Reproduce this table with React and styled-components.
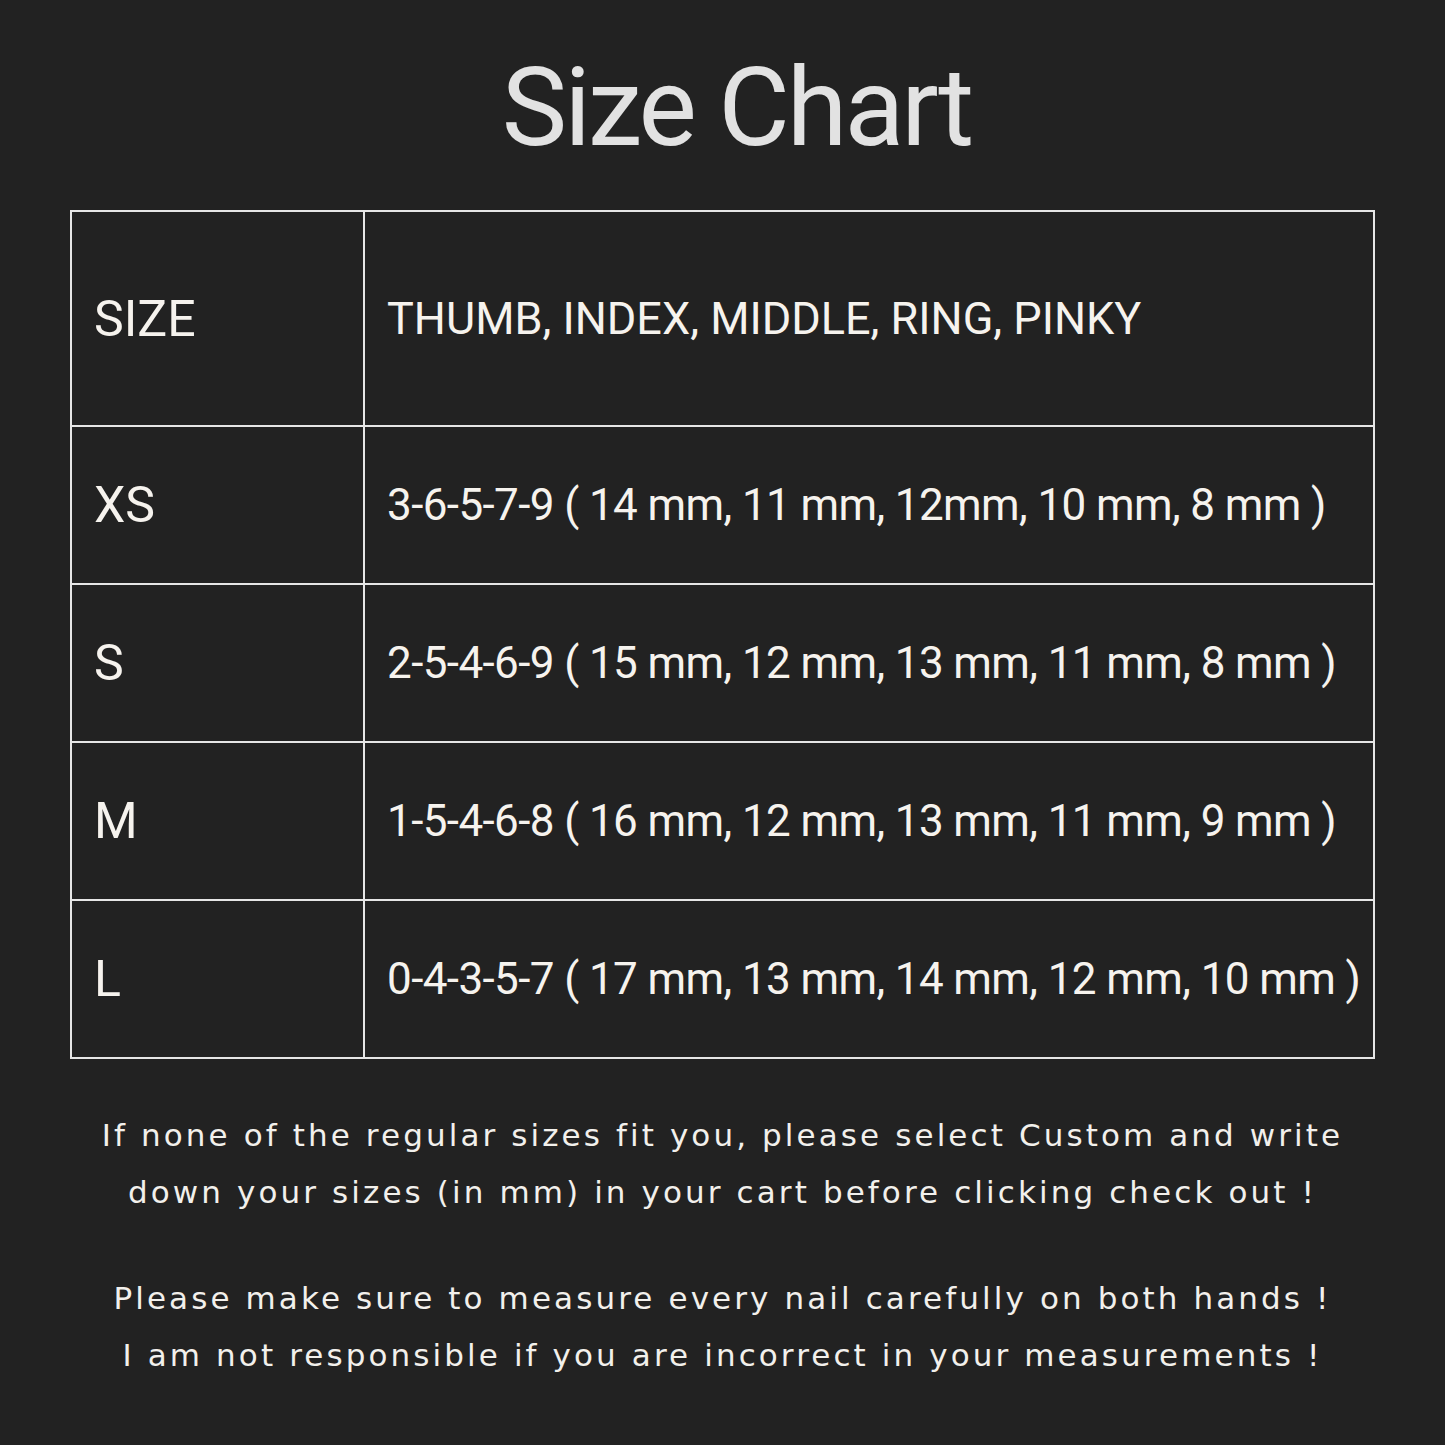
import React from "react";
import styled, { createGlobalStyle } from "styled-components";

const GlobalStyle = createGlobalStyle`
  html, body {
    margin: 0;
    padding: 0;
    background: #222222;
  }
  body {
    font-family: Roboto, "Liberation Sans", sans-serif;
  }
`;

const Page = styled.div`
  width: 1445px;
  height: 1445px;
  box-sizing: border-box;
  padding-top: 50px;
  display: flex;
  flex-direction: column;
  align-items: center;
  background: #222222;
`;

const Title = styled.h1`
  margin: 0 0 0 28px;
  font-size: 110px;
  line-height: 116px;
  font-weight: 400;
  color: #e2e2e2;
  letter-spacing: -3px;
`;

const Table = styled.table`
  margin-top: 44px;
  width: 1305px;
  border-collapse: collapse;
  table-layout: fixed;
  color: #f6f3ee;
`;

const Row = styled.tr`
  height: ${(p) => (p.$head ? 215 : 158)}px;
`;

const Cell = styled.td`
  border: 2px solid #e6e6e6;
  padding: 0 0 0 22px;
  vertical-align: middle;
  white-space: nowrap;
  font-size: ${(p) => p.$size}px;
  letter-spacing: ${(p) => p.$spacing || 0}px;
  &:first-child {
    width: 293px;
    box-sizing: border-box;
  }
`;

const Notes = styled.div`
  margin-top: 48px;
  display: flex;
  flex-direction: column;
  gap: 49px;
`;

const Note = styled.p`
  margin: 0;
  text-align: center;
  color: #f2f0ec;
  font-family: "DejaVu Sans", Roboto, sans-serif;
  font-size: 31px;
  line-height: 57px;
  letter-spacing: 3.1px;
`;

const rows = [
  ["XS", "3-6-5-7-9 ( 14 mm, 11 mm, 12mm, 10 mm, 8 mm )"],
  ["S", "2-5-4-6-9 ( 15 mm, 12 mm, 13 mm, 11 mm, 8 mm )"],
  ["M", "1-5-4-6-8 ( 16 mm, 12 mm, 13 mm, 11 mm, 9 mm )"],
  ["L", "0-4-3-5-7 ( 17 mm, 13 mm, 14 mm, 12 mm, 10 mm )"],
];

export default function App() {
  return (
    <Page>
      <GlobalStyle />
      <Title>Size Chart</Title>
      <Table>
        <tbody>
          <Row $head>
            <Cell $size={50}>SIZE</Cell>
            <Cell $size={45}>THUMB, INDEX, MIDDLE, RING, PINKY</Cell>
          </Row>
          {rows.map(([size, values]) => (
            <Row key={size}>
              <Cell $size={50}>{size}</Cell>
              <Cell $size={44} $spacing={-0.6}>{values}</Cell>
            </Row>
          ))}
        </tbody>
      </Table>
      <Notes>
        <Note>
          If none of the regular sizes fit you, please select Custom and write
          <br />
          down your sizes (in mm) in your cart before clicking check out !
        </Note>
        <Note>
          Please make sure to measure every nail carefully on both hands !
          <br />I am not responsible if you are incorrect in your measurements !
        </Note>
      </Notes>
    </Page>
  );
}
